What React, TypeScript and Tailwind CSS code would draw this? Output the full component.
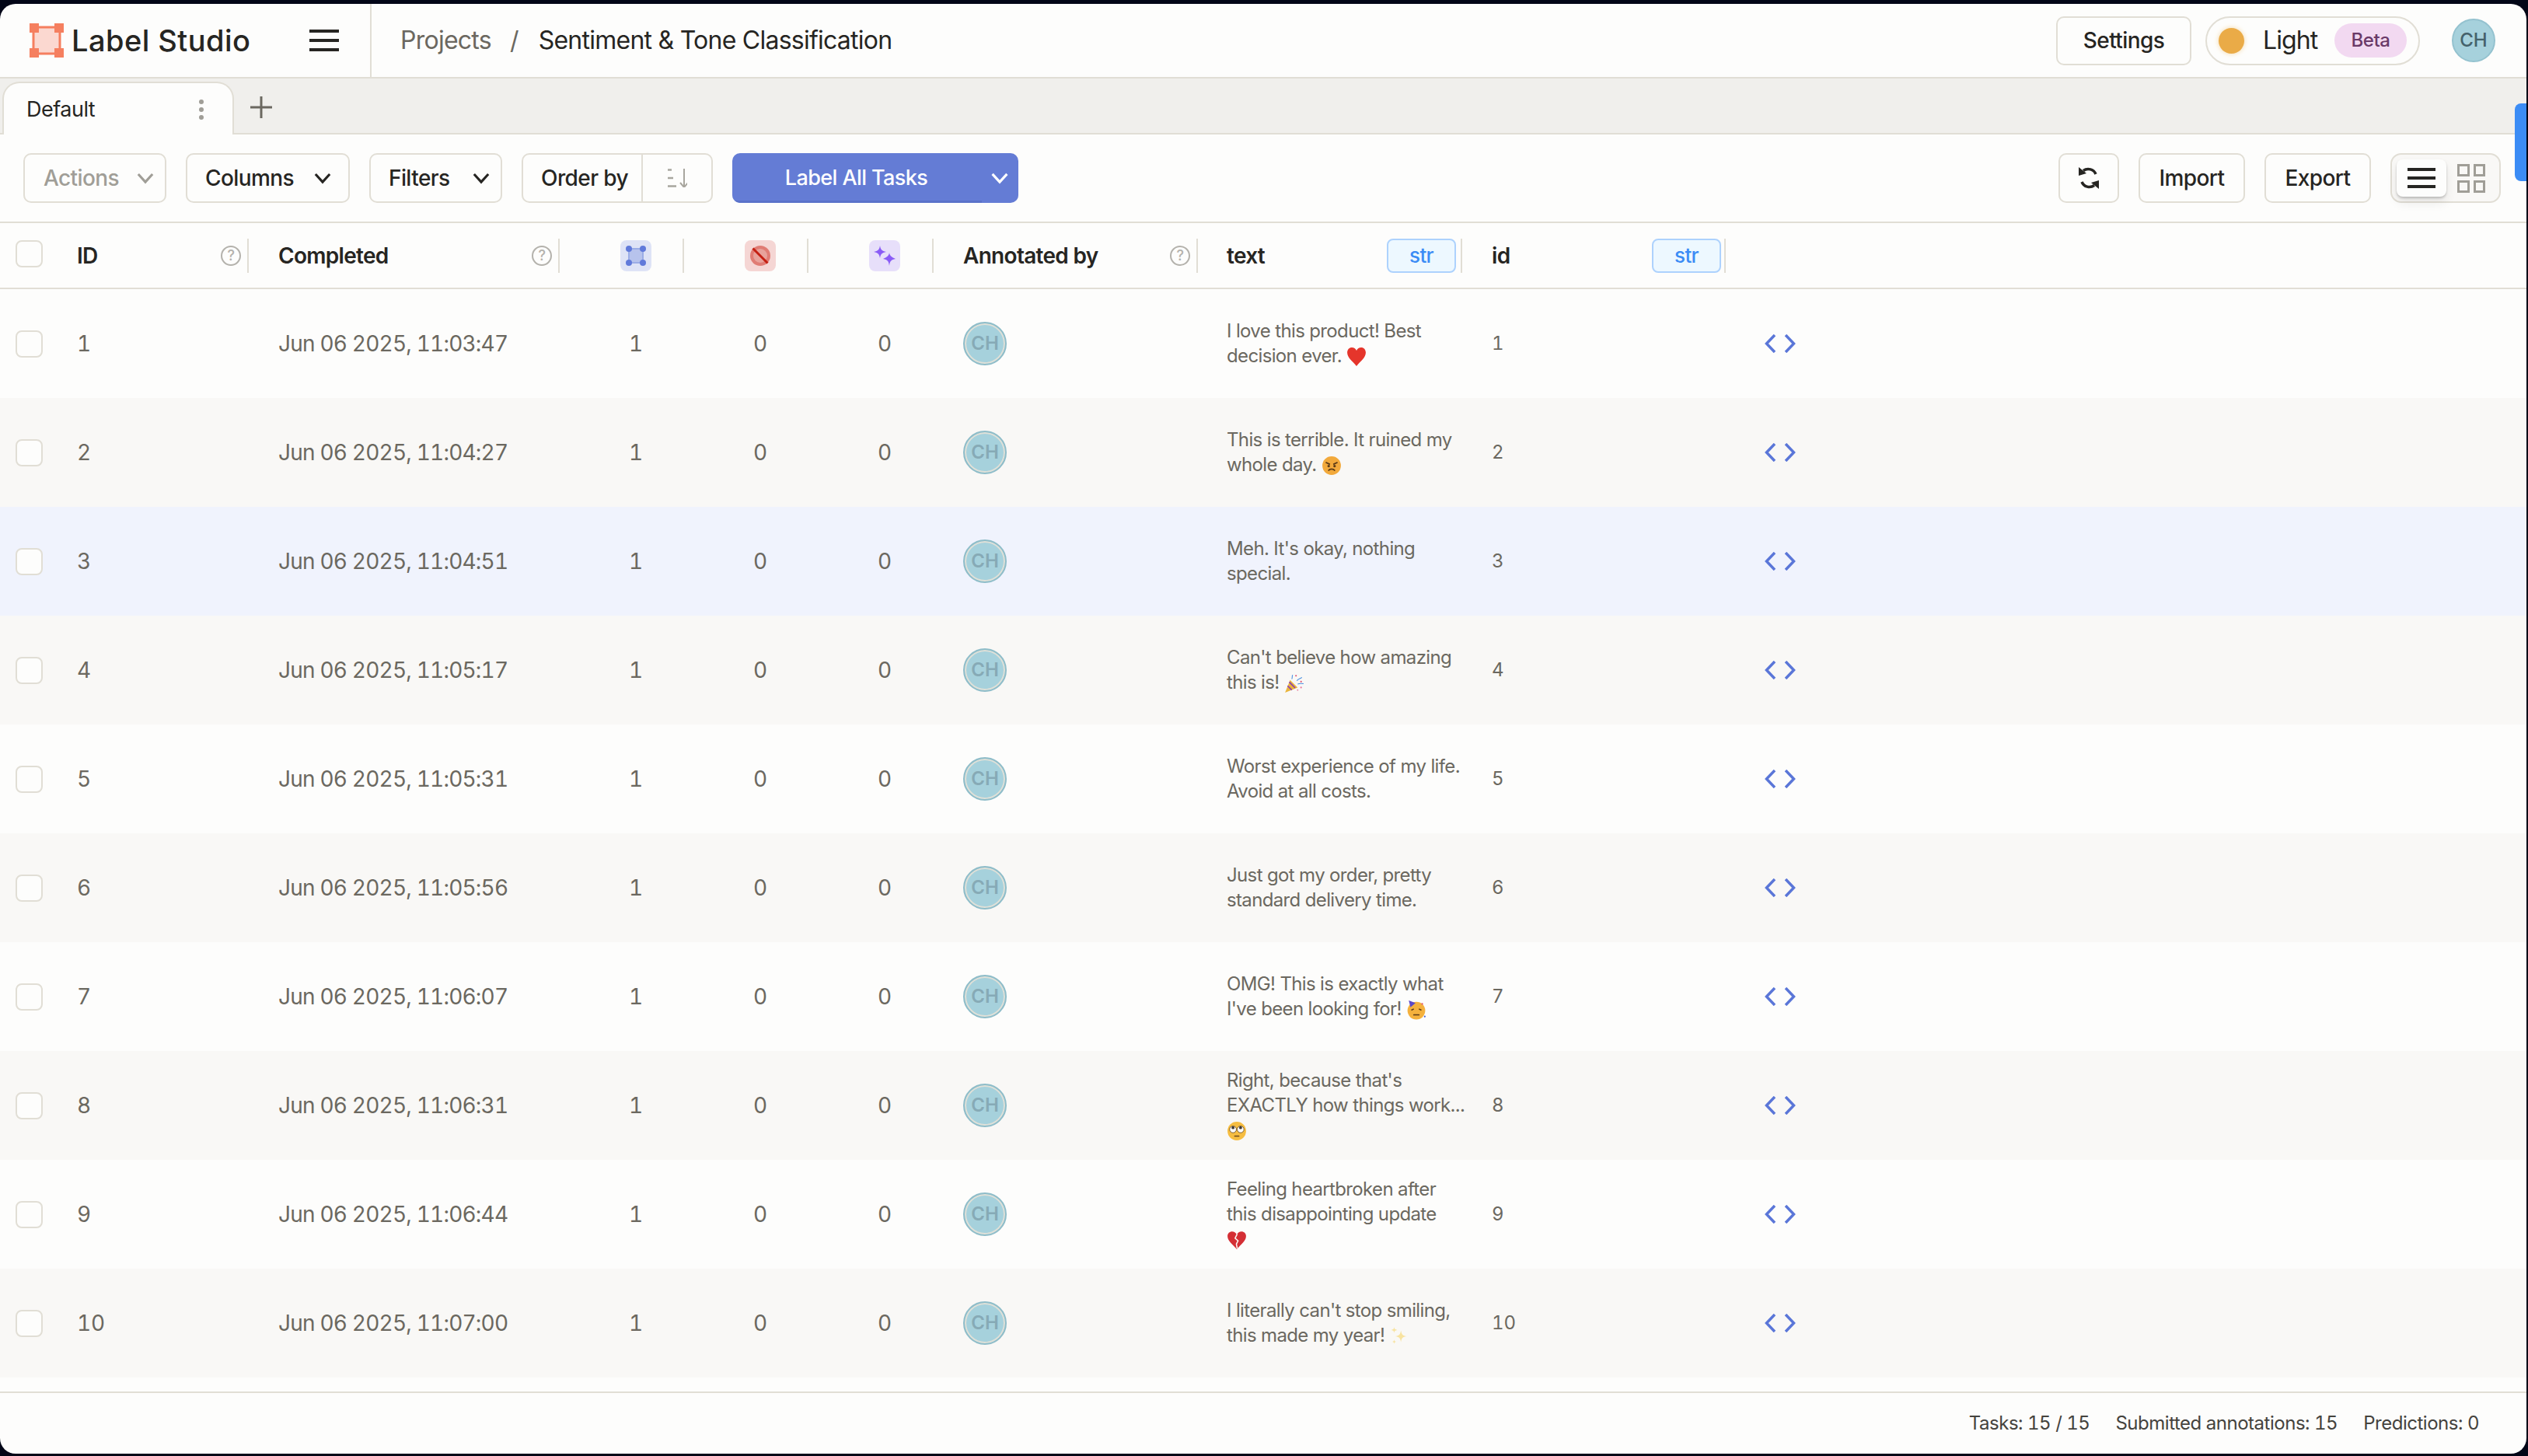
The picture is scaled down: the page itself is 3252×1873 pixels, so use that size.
import React from 'react';

const rows = [
  { id: 1, date: 'Jun 06 2025, 11:03:47', lines: ['I love this product! Best', 'decision ever.'], emoji: 'heart' },
  { id: 2, date: 'Jun 06 2025, 11:04:27', lines: ['This is terrible. It ruined my', 'whole day.'], emoji: 'angry' },
  { id: 3, date: 'Jun 06 2025, 11:04:51', lines: ["Meh. It's okay, nothing", 'special.'] },
  { id: 4, date: 'Jun 06 2025, 11:05:17', lines: ["Can't believe how amazing", 'this is!'], emoji: 'popper' },
  { id: 5, date: 'Jun 06 2025, 11:05:31', lines: ['Worst experience of my life.', 'Avoid at all costs.'] },
  { id: 6, date: 'Jun 06 2025, 11:05:56', lines: ['Just got my order, pretty', 'standard delivery time.'] },
  { id: 7, date: 'Jun 06 2025, 11:06:07', lines: ['OMG! This is exactly what', "I've been looking for!"], emoji: 'party' },
  { id: 8, date: 'Jun 06 2025, 11:06:31', lines: ["Right, because that's", 'EXACTLY how things work...', ''], emoji: 'roll' },
  { id: 9, date: 'Jun 06 2025, 11:06:44', lines: ['Feeling heartbroken after', 'this disappointing update', ''], emoji: 'broken' },
  { id: 10, date: 'Jun 06 2025, 11:07:00', lines: ["I literally can't stop smiling,", 'this made my year!'], emoji: 'sparkles' },
];

function Emoji({ name }: { name: string }) {
  const cls = 'inline-block w-[26px] h-[26px] align-[-6px]';
  if (name === 'heart') {
    return (
      <svg viewBox="0 0 24 24" className={cls}>
        <path d="M12 23C7 17 1 13 1 7C1 3.500 3.500 1 6.500 1c2.500 0 4.400 1.300 5.500 3.500C13.100 2.300 15 1 17.500 1 20.500 1 23 3.500 23 7 23 13 17 17 12 23z" fill="#e5352b" />
      </svg>
    );
  }
  if (name === 'broken') {
    return (
      <svg viewBox="0 0 24 24" className={cls}>
        <path d="M12 23C7 17 1 13 1 7.500 1 4 3.500 2 6.500 2c2.300 0 4.200 1.200 5.500 3.500C13.300 3.200 15.200 2 17.500 2 20.500 2 23 4 23 7.500 23 13 17 17 12 23z" fill="#d42f35" />
        <path d="M12.500 5l-2.500 5 3.500 3-2 4 1 5" fill="none" stroke="#fbf9f6" strokeWidth="1.400" />
      </svg>
    );
  }
  if (name === 'angry') {
    return (
      <svg viewBox="0 0 24 24" className={cls}>
        <circle cx="12" cy="12" r="11" fill="#f2a93b" />
        <path d="M5 8l5 2.500M19 8l-5 2.500" stroke="#5b3a16" strokeWidth="1.600" />
        <circle cx="8.500" cy="12.500" r="1.500" fill="#5b3a16" />
        <circle cx="15.500" cy="12.500" r="1.500" fill="#5b3a16" />
        <path d="M8 18c2-2.500 6-2.500 8 0" fill="none" stroke="#5b3a16" strokeWidth="1.600" />
      </svg>
    );
  }
  if (name === 'roll') {
    return (
      <svg viewBox="0 0 24 24" className={cls}>
        <circle cx="12" cy="12" r="11" fill="#f6bd41" />
        <circle cx="7.500" cy="10" r="4" fill="#fff" stroke="#6b4a1c" strokeWidth="0.800" />
        <circle cx="16.500" cy="10" r="4" fill="#fff" stroke="#6b4a1c" strokeWidth="0.800" />
        <circle cx="7.500" cy="8" r="1.800" fill="#3f3a36" />
        <circle cx="16.500" cy="8" r="1.800" fill="#3f3a36" />
        <path d="M9.500 18h5" stroke="#6b4a1c" strokeWidth="1.400" strokeLinecap="round" />
      </svg>
    );
  }
  if (name === 'popper') {
    return (
      <svg viewBox="0 0 24 24" className={cls}>
        <path d="M1 23l6-15 9 9z" fill="#eab53c" />
        <path d="M4 15l5 5M6 10.500l7 7" stroke="#8a3fb0" strokeWidth="1.500" />
        <path d="M9 7c1-2 0-3 1-5M15 9c2-3 4-2 6-4M16 13c2-1 4-1 7-.500" fill="none" stroke="#4a8fe0" strokeWidth="1" />
        <circle cx="14" cy="3" r="1" fill="#e0526e" />
        <circle cx="20" cy="10" r="1" fill="#e0526e" />
        <circle cx="20" cy="17" r="1" fill="#e8799a" />
        <circle cx="16" cy="20" r="0.800" fill="#e8799a" />
      </svg>
    );
  }
  if (name === 'party') {
    return (
      <svg viewBox="0 0 24 24" className={cls}>
        <circle cx="12" cy="13" r="10.500" fill="#f4b13d" />
        <path d="M3 1l8 3-6 5z" fill="#5b49c8" />
        <path d="M6 12.500l3-1.500M18 12.500l-3-1.500" stroke="#5b3a16" strokeWidth="1.400" />
        <path d="M9 18h6" stroke="#5b3a16" strokeWidth="1.600" strokeLinecap="round" />
        <circle cx="19" cy="5" r="1" fill="#e0526e" />
        <circle cx="22" cy="20" r="1" fill="#4a5fd0" />
      </svg>
    );
  }
  return (
    <svg viewBox="0 0 24 24" className={cls}>
      <path d="M14 5c.800 5 2 6.200 7 7-5 .800-6.200 2-7 7-.800-5-2-6.200-7-7 5-.800 6.200-2 7-7z" fill="#f8e3a0" />
      <path d="M6 1c.400 2.500 1 3 3.500 3.500C7 5 6.400 5.500 6 8c-.400-2.500-1-3-3.500-3.500C5 4 5.600 3.500 6 1z" fill="#f8e3a0" />
      <path d="M6 16c.300 1.800.700 2.200 2.500 2.500-1.800.300-2.200.700-2.500 2.500-.300-1.800-.700-2.200-2.500-2.500 1.800-.300 2.200-.700 2.500-2.500z" fill="#f8e3a0" />
    </svg>
  );
}

function Logo() {
  return (
    <svg viewBox="0 0 44 44" className="w-[44px] h-[44px] shrink-0">
      <rect x="5" y="5" width="34" height="34" fill="#fbd8d0" stroke="#f57f5f" strokeWidth="3" />
      <rect x="0" y="0" width="12" height="12" fill="#f57f5f" />
      <rect x="32" y="0" width="12" height="12" fill="#f57f5f" />
      <rect x="0" y="32" width="12" height="12" fill="#f57f5f" />
      <rect x="32" y="32" width="12" height="12" fill="#f57f5f" />
    </svg>
  );
}

function Chevron({ color = '#262522', w = 'w-[22px]' }: { color?: string; w?: string }) {
  return (
    <svg viewBox="0 0 24 16" className={`${w} h-[15px] shrink-0`}>
      <path d="M2 2l10 11L22 2" fill="none" stroke={color} strokeWidth="3.400" />
    </svg>
  );
}

function Help() {
  return (
    <span className="w-[26px] h-[26px] rounded-full border-[2px] border-[#b4b2ac] text-[#b4b2ac] text-[18px] font-medium flex items-center justify-center shrink-0">?</span>
  );
}

function ToolButton({ w, children, muted }: { w: string; children: React.ReactNode; muted?: boolean }) {
  return (
    <button className={`${w} h-[64px] shrink-0 flex items-center justify-between border-[2px] border-[#e1ded5] rounded-[10px] bg-[#fdfdfc] text-[28px] font-medium tracking-[-0.6px] ${muted ? 'text-[#a09e97]' : 'text-[#262522]'}`}>
      {children}
    </button>
  );
}

function Checkbox() {
  return <span className="block w-[35px] h-[35px] rounded-[8px] border-[2px] border-[#e1ded5] bg-[#fdfdfc]" />;
}

function Avatar() {
  return (
    <span className="w-[56px] h-[56px] rounded-full bg-[#a6d1dc] border-[2px] border-[#8fbdc9] ring-[2px] ring-inset ring-[#dfe0d8] flex items-center justify-center text-[24px] font-semibold text-[#86aab6]">CH</span>
  );
}

function TypeTag() {
  return (
    <span className="w-[89px] h-[44px] rounded-[8px] border-[2px] border-[#add2fd] bg-[#edf8ff] flex items-center justify-center text-[26px] font-medium text-[#3b8cf5]">str</span>
  );
}

function HeaderCell({ w, children }: { w: string; children: React.ReactNode }) {
  return (
    <div className={`${w} h-[44px] shrink-0 flex items-center justify-between border-r-[2px] border-[#e1ded5] text-[28px] font-semibold tracking-[-0.7px] text-[#262522]`}>
      {children}
    </div>
  );
}

function IconBox({ bg, children }: { bg: string; children: React.ReactNode }) {
  return <span className={`${bg} w-[40px] h-[40px] rounded-[8px] flex items-center justify-center`}>{children}</span>;
}

export default function App() {
  return (
    <div className="w-[3252px] h-[1873px] bg-[#020617] pt-[5px] pr-[2px] pb-[3px] overflow-hidden" style={{ fontFamily: 'Inter, "Liberation Sans", sans-serif' }}>
      <div className="relative h-full flex flex-col bg-[#fdfdfc] rounded-[20px] overflow-hidden">
        {/* top bar */}
        <header className="h-[96px] shrink-0 flex items-center border-b-[2px] border-[#e1ded5]">
          <div className="w-[478px] h-full shrink-0 flex items-center border-r-[2px] border-[#e1ded5] pl-[38px]">
            <Logo />
            <span className="ml-[10px] text-[38px] font-medium tracking-[0.45px] text-[#262522]">Label Studio</span>
            <span className="ml-[76px] w-[38px] flex flex-col gap-[8px]">
              <i className="block h-[4px] bg-[#262522]" />
              <i className="block h-[4px] bg-[#262522]" />
              <i className="block h-[4px] bg-[#262522]" />
            </span>
          </div>
          <div className="flex items-center pl-[37px] text-[32px] tracking-[-0.75px]">
            <span className="text-[#6b6860]">Projects</span>
            <span className="ml-[24px] mr-[26px] text-[#6b6860]">/</span>
            <span className="text-[#262522]">Sentiment &amp; Tone Classification</span>
          </div>
          <div className="ml-auto flex items-center pr-[40px]">
            <button className="w-[174px] h-[63px] border-[2px] border-[#e1ded5] rounded-[10px] text-[28px] font-medium tracking-[-0.6px] text-[#262522]">Settings</button>
            <div className="ml-[18px] w-[276px] h-[63px] rounded-full border-[2px] border-[#e1ded5] flex items-center pl-[15px] pr-[15px]">
              <span className="w-[33px] h-[33px] rounded-full bg-[#eaab47] shadow-[0_0_6px_#f5d9a8]" />
              <span className="ml-[24px] text-[32px] tracking-[-0.9px] text-[#262522]">Light</span>
              <span className="ml-auto w-[93px] h-[44px] rounded-full bg-[#f2d9f1] flex items-center justify-center text-[24px] font-medium tracking-[-0.4px] text-[#6a3a68]">Beta</span>
            </div>
            <span className="ml-[41px] w-[56px] h-[56px] rounded-full bg-[#a6d1dc] border-[2px] border-[#94c2cf] flex items-center justify-center text-[24px] font-medium text-[#45626b]">CH</span>
          </div>
        </header>

        {/* tabs */}
        <div className="h-[72px] shrink-0 bg-[#f0efec] border-b-[2px] border-[#e1ded5] flex items-end pl-[3px]">
          <div className="w-[298px] h-[68px] -mb-[2px] bg-[#fdfdfc] border-[2px] border-b-0 border-[#e1ded5] rounded-t-[22px] flex items-center justify-between pt-[2px] pl-[29px] pr-[37px]">
            <span className="text-[27px] font-normal tracking-[-0.5px] text-[#262522]">Default</span>
            <span className="flex flex-col gap-[4px]">
              <i className="block w-[6px] h-[6px] rounded-full bg-[#a09e97]" />
              <i className="block w-[6px] h-[6px] rounded-full bg-[#a09e97]" />
              <i className="block w-[6px] h-[6px] rounded-full bg-[#a09e97]" />
            </span>
          </div>
          <svg viewBox="0 0 28 28" className="w-[28px] h-[28px] ml-[21px] mb-[19px]">
            <path d="M14 0v28M0 14h28" stroke="#6b6860" strokeWidth="3" />
          </svg>
        </div>

        {/* toolbar */}
        <div className="h-[114px] shrink-0 border-b-[2px] border-[#e1ded5] flex items-center pl-[30px] pr-[33px]">
          <ToolButton w="w-[184px] pl-[24px] pr-[14px]" muted>Actions<Chevron color="#a09e97" /></ToolButton>
          <div className="w-[25px] shrink-0" />
          <ToolButton w="w-[211px] pl-[23px] pr-[22px]">Columns<Chevron /></ToolButton>
          <div className="w-[25px] shrink-0" />
          <ToolButton w="w-[171px] pl-[23px] pr-[14px]">Filters<Chevron /></ToolButton>
          <div className="w-[25px] shrink-0" />
          <div className="w-[246px] h-[64px] shrink-0 flex border-[2px] border-[#e1ded5] rounded-[10px]">
            <span className="w-[154px] pl-[6px] border-r-[2px] border-[#e1ded5] flex items-center justify-center text-[28px] font-medium tracking-[-0.6px] text-[#262522]">Order by</span>
            <span className="flex-1 flex items-center justify-center">
              <svg viewBox="0 0 26 24" className="w-[26px] h-[24px]">
                <path d="M1 1.500h5M1 12h7M1 22.500h11" stroke="#a8a69e" strokeWidth="2.500" />
                <path d="M22 0v23M17 18l5 6 5-6" fill="none" stroke="#a8a69e" strokeWidth="2" />
              </svg>
            </span>
          </div>
          <div className="w-[25px] shrink-0" />
          <div className="w-[368px] h-[64px] shrink-0 flex rounded-[10px] overflow-hidden bg-[#647cd5] text-white">
            <span className="w-[321px] pt-[3px] pr-[2px] border-b-[3px] border-[#5a72c9] flex items-center justify-center text-[27px] font-medium tracking-[-0.6px]">Label All Tasks</span>
            <span className="flex-1 flex items-center justify-center pr-[2px]"><Chevron color="#ffffff" w="w-[24px]" /></span>
          </div>
          <div className="ml-auto flex items-center">
            <button className="w-[78px] h-[64px] border-[2px] border-[#e1ded5] rounded-[10px] flex items-center justify-center">
              <svg viewBox="0 0 28 30" className="w-[28px] h-[30px]">
                <path d="M23 10A10.500 10.500 0 0 0 7 5.500" fill="none" stroke="#262522" strokeWidth="3.500" />
                <path d="M1 1v11l10-3z" fill="#262522" />
                <path d="M5 20a10.500 10.500 0 0 0 16 4.500" fill="none" stroke="#262522" strokeWidth="3.500" />
                <path d="M27 29V18l-10 3z" fill="#262522" />
              </svg>
            </button>
            <button className="ml-[25px] w-[137px] h-[64px] border-[2px] border-[#e1ded5] rounded-[10px] text-[28px] font-medium tracking-[-0.6px] text-[#262522]">Import</button>
            <button className="ml-[25px] w-[137px] h-[64px] border-[2px] border-[#e1ded5] rounded-[10px] text-[28px] font-medium tracking-[-0.6px] text-[#262522]">Export</button>
            <div className="ml-[25px] w-[142px] h-[64px] border-[2px] border-[#e1ded5] rounded-[14px] bg-[#f9f8f6] flex items-center pl-[6px]">
              <span className="w-[64px] h-[48px] rounded-[8px] bg-[#fdfdfc] shadow-[0_2px_3px_rgba(0,0,0,0.2),0_8px_14px_rgba(0,0,0,0.08)] flex flex-col items-center justify-center gap-[7px]">
                <i className="block w-[36px] h-[4px] bg-[#262522]" />
                <i className="block w-[36px] h-[4px] bg-[#262522]" />
                <i className="block w-[36px] h-[4px] bg-[#262522]" />
              </span>
              <span className="ml-[14px] w-[36px] grid grid-cols-2 gap-[5px]">
                <i className="block h-[16px] border-[3px] border-[#a09e97]" />
                <i className="block h-[16px] border-[3px] border-[#a09e97]" />
                <i className="block h-[16px] border-[3px] border-[#a09e97]" />
                <i className="block h-[16px] border-[3px] border-[#a09e97]" />
              </span>
            </div>
          </div>
        </div>

        {/* side handle */}
        <div className="absolute right-0 top-[128px] w-[15px] h-[100px] bg-[#3b8cf5] rounded-l-[8px]" />

        {/* table header */}
        <div className="h-[85px] shrink-0 border-b-[2px] border-[#e1ded5] flex items-center">
          <div className="w-[78px] shrink-0 pl-[20px] -mt-[4px]"><Checkbox /></div>
          <HeaderCell w="w-[242px] pl-[21px] pr-[8px]">ID<Help /></HeaderCell>
          <HeaderCell w="w-[400px] pl-[38px] pr-[8px]">Completed<Help /></HeaderCell>
          <HeaderCell w="w-[160px] pl-[78px]">
            <IconBox bg="bg-[#dee3f6]">
              <svg viewBox="0 0 26 26" className="w-[26px] h-[26px]">
                <rect x="4" y="4" width="18" height="18" fill="#b7c3ec" stroke="#9badE6" strokeWidth="2" />
                <circle cx="4" cy="4" r="4" fill="#617ada" />
                <circle cx="22" cy="4" r="4" fill="#617ada" />
                <circle cx="4" cy="22" r="4" fill="#617ada" />
                <circle cx="22" cy="22" r="4" fill="#617ada" />
              </svg>
            </IconBox>
          </HeaderCell>
          <HeaderCell w="w-[160px] pl-[78px]">
            <IconBox bg="bg-[#f5d6d4]">
              <svg viewBox="0 0 26 26" className="w-[26px] h-[26px]">
                <circle cx="13" cy="13" r="13" fill="#e07c74" />
                <circle cx="13" cy="13" r="9" fill="#e8a29b" />
                <path d="M3.500 3.500l19 19" stroke="#c41f12" strokeWidth="3" />
              </svg>
            </IconBox>
          </HeaderCell>
          <HeaderCell w="w-[161px] pl-[78px]">
            <IconBox bg="bg-[#e7dffa]">
              <svg viewBox="0 0 28 26" className="w-[28px] h-[26px]">
                <path d="M8 0c.800 5 2.500 7 8 8-5.500 1-7.200 3-8 8-.800-5-2.500-7-8-8 5.500-1 7.200-3 8-8z" fill="#8a5cf6" />
                <path d="M20 9c.700 4 2.200 5.300 8 8-5.800 1-7.300 3-8 9-.700-6-2.200-8-8-9 5.800-2.700 7.300-4 8-8z" fill="#8a5cf6" />
              </svg>
            </IconBox>
          </HeaderCell>
          <HeaderCell w="w-[340px] pl-[38px] pr-[8px]">Annotated by<Help /></HeaderCell>
          <HeaderCell w="w-[340px] pl-[37px] pr-[6px]">text<TypeTag /></HeaderCell>
          <HeaderCell w="w-[339px] pl-[38px] pr-[4px]">id<TypeTag /></HeaderCell>
        </div>

        {/* rows */}
        <div className="flex-1 min-h-0">
          {rows.map((row) => (
            <div key={row.id} className={`h-[140px] flex items-center text-[#6b6860] ${row.id === 3 ? 'bg-[#f0f3fd]' : row.id % 2 === 0 ? 'bg-[#f9f8f6]' : 'bg-[#fdfdfc]'}`}>
              <div className="w-[78px] shrink-0 pl-[20px]"><Checkbox /></div>
              <div className="w-[242px] shrink-0 pl-[21px] text-[28px] tabular-nums tracking-[-0.2px]">{row.id}</div>
              <div className="w-[400px] shrink-0 pl-[38px] text-[28px] tabular-nums tracking-[-0.8px] whitespace-nowrap">{row.date}</div>
              <div className="w-[160px] shrink-0 pl-[78px]"><span className="block w-[40px] text-center text-[28px] tabular-nums">1</span></div>
              <div className="w-[160px] shrink-0 pl-[78px]"><span className="block w-[40px] text-center text-[28px] tabular-nums">0</span></div>
              <div className="w-[161px] shrink-0 pl-[78px]"><span className="block w-[40px] text-center text-[28px] tabular-nums">0</span></div>
              <div className="w-[340px] shrink-0 pl-[38px]"><Avatar /></div>
              <div className="w-[340px] shrink-0 pl-[37px] text-[24px] leading-[32px] tracking-[-0.64px] whitespace-nowrap">
                {row.lines.map((line, i) => (
                  <div key={i} className="h-[32px]">
                    {line}
                    {i === row.lines.length - 1 && row.emoji ? <> <Emoji name={row.emoji} /></> : null}
                  </div>
                ))}
              </div>
              <div className="w-[339px] shrink-0 pl-[38px] text-[24px] tabular-nums">{row.id}</div>
              <div className="w-[180px] shrink-0 pl-[50px] flex items-center">
                <svg viewBox="0 0 40 24" className="w-[40px] h-[24px]">
                  <path d="M13 1L2.500 12 13 23M27 1l10.500 11L27 23" fill="none" stroke="#5a76d8" strokeWidth="3.500" />
                </svg>
              </div>
            </div>
          ))}
        </div>

        {/* footer */}
        <footer className="h-[80px] shrink-0 border-t-[2px] border-[#e1ded5] flex items-center justify-end gap-[33px] pr-[61px] text-[24px] tabular-nums tracking-[-0.48px] text-[#45433e]">
          <span>Tasks: 15 / 15</span>
          <span>Submitted annotations: 15</span>
          <span>Predictions: 0</span>
        </footer>
      </div>
    </div>
  );
}
